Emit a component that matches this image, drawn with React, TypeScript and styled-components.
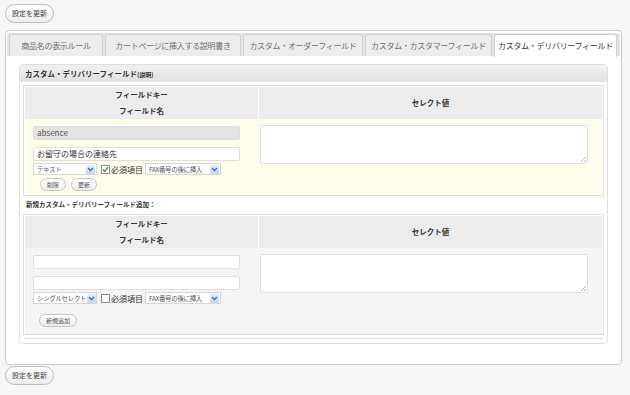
import React from "react";
import styled, { createGlobalStyle, css } from "styled-components";

const GlobalStyle = createGlobalStyle`
  html, body {
    margin: 0;
    background: #f6f6f6;
    font-family: "Noto Sans CJK JP", "DejaVu Sans", sans-serif;
    color: #333;
  }
`;

const Page = styled.div`
  padding: 4px 8px 8px 5px;
  width: 617px;
`;

const UpdateButton = styled.button`
  display: block;
  height: 19px;
  padding: 0 6px;
  border: 1px solid #bdbdbd;
  border-radius: 10px;
  background: linear-gradient(#ffffff, #ececec);
  font-family: inherit;
  font-size: 7px;
  color: #444;
  line-height: 17px;
`;

const TabPanel = styled.div`
  margin: 7px 0 1px;
  border: 1px solid #c9c9c9;
  border-radius: 4px;
  background: #fff;
  padding: 2px 0 0;
  height: 335px;
  box-sizing: border-box;
`;

const TabBar = styled.div`
  display: flex;
  gap: 2px;
  margin: 0 1px;
  padding: 1px 0 0 2px;
  height: 22px;
  background: #e4e4e4;
  border-radius: 3px 3px 0 0;
`;

const Tab = styled.div<{ $active?: boolean; $width: number }>`
  width: ${(p) => p.$width}px;
  flex: none;
  height: 22px;
  box-sizing: border-box;
  border: 1px solid #cfcfcf;
  border-bottom: none;
  border-radius: 3px 3px 0 0;
  background: #ececec;
  color: #6f6f6f;
  font-size: 8px;
  letter-spacing: -0.3px;
  line-height: 21px;
  text-align: center;
  white-space: nowrap;
  ${(p) =>
    p.$active &&
    css`
      background: #fff;
      color: #333;
      height: 23px;
    `}
`;

const Content = styled.div`
  padding: 8px 13px 0 13px;
`;

const Box = styled.div`
  border: 1px solid #dedede;
  border-radius: 4px;
  height: 280px;
  box-sizing: border-box;
`;

const BoxHeader = styled.div`
  height: 17px;
  padding: 0 5px;
  background: linear-gradient(#f0f0f0, #e2e2e2);
  border-radius: 3px 3px 0 0;
  font-size: 7.5px;
  font-weight: bold;
  line-height: 17px;
  color: #333;

  small {
    font-size: 6px;
  }
`;

const BoxBody = styled.div`
  padding: 3px 3px 0;
`;

const FieldTable = styled.div`
  display: grid;
  grid-template-columns: 233px 1fr;
  border: 1px solid #dcdcdc;
  padding: 1px 1px 0;
`;

const HeadCell = styled.div<{ $rows?: number }>`
  background: #ececec;
  height: 16px;
  font-size: 7.5px;
  font-weight: bold;
  line-height: 16px;
  text-align: center;
  ${(p) =>
    p.$rows &&
    css`
      grid-row: span ${p.$rows};
      height: auto;
      display: flex;
      align-items: center;
      justify-content: center;
      margin-left: 1px;
    `}
`;

const BodyCell = styled.div<{ $tone: "edit" | "new"; $right?: boolean }>`
  background: ${(p) => (p.$tone === "edit" ? "#fdfde9" : "#f4f4f4")};
  display: flex;
  flex-direction: column;
  align-items: flex-start;
  padding: ${(p) => (p.$right ? "6px 0 0 2px" : "7px 0 5px 8px")};
  height: ${(p) => (p.$tone === "edit" ? "76px" : "86px")};
  box-sizing: border-box;
`;

const TextInput = styled.div<{ $readonly?: boolean; $gap?: number }>`
  width: 207px;
  height: 14px;
  box-sizing: border-box;
  border: 1px solid #dedede;
  border-radius: 2px;
  background: ${(p) => (p.$readonly ? "#e3e3e3" : "#fff")};
  font-size: 8px;
  line-height: 12px;
  padding: 0 3px;
  color: ${(p) => (p.$readonly ? "#555" : "#333")};
  margin-top: ${(p) => p.$gap ?? 0}px;
`;

const TextArea = styled.div<{ $height: number }>`
  position: relative;
  width: 328px;
  height: ${(p) => p.$height}px;
  box-sizing: border-box;
  border: 1px solid #dedede;
  border-radius: 2px;
  background: #fff;
`;

const Grip = styled.svg`
  position: absolute;
  right: 1px;
  bottom: 1px;
`;

const OptionRow = styled.div`
  display: flex;
  align-items: center;
  height: 12px;
  margin-top: 2px;
`;

const Select = styled.div<{ $width: number }>`
  display: flex;
  align-items: center;
  justify-content: space-between;
  width: ${(p) => p.$width}px;
  height: 12px;
  box-sizing: border-box;
  border: 1px solid #d6d6d6;
  background: #fff;
  padding: 0 1px 0 3px;
  font-size: 6.5px;
  letter-spacing: -0.35px;
  color: #555;
  white-space: nowrap;
  overflow: hidden;
`;

const Arrow = styled.span`
  display: flex;
  flex: none;
  align-items: center;
  justify-content: center;
  width: 9px;
  height: 9px;
  margin-left: 1px;
  background: linear-gradient(#e2ecfa, #c3d6f2);
  border-radius: 1px;
`;

const CheckLabel = styled.label`
  display: flex;
  align-items: center;
  margin: 0 2px 0 4px;
  font-size: 8px;
  color: #333;
`;

const CheckBox = styled.span`
  display: flex;
  width: 9px;
  height: 9px;
  box-sizing: border-box;
  border: 1px solid #8d8d8d;
  background: #fff;
  margin-right: 1px;
`;

const SmallButtons = styled.div<{ $top: number; $left: number }>`
  display: flex;
  gap: 5px;
  margin: ${(p) => p.$top}px 0 0 ${(p) => p.$left}px;
`;

const SmallButton = styled.button`
  height: 13px;
  padding: 0 6px;
  border: 1px solid #c4c4c4;
  border-radius: 7px;
  background: linear-gradient(#ffffff, #ededed);
  font-family: inherit;
  font-size: 6px;
  color: #555;
  line-height: 11px;
`;

const NewLabel = styled.div`
  font-size: 6.5px;
  font-weight: bold;
  padding: 4px 0 5px 3px;
  line-height: 9px;
`;

const FootLine = styled.div`
  margin: 3px 1px 0;
  height: 1px;
  border-top: 1px solid #dcdcdc;
`;

const SelectBox = ({ label, width }: { label: string; width: number }) => (
  <Select $width={width}>
    <span>{label}</span>
    <Arrow>
      <svg width="7" height="5" viewBox="0 0 7 5">
        <path d="M1 1 L3.5 3.5 L6 1" stroke="#3b6fc4" strokeWidth="1.4" fill="none" />
      </svg>
    </Arrow>
  </Select>
);

const Required = ({ checked }: { checked?: boolean }) => (
  <CheckLabel>
    <CheckBox>
      {checked && (
        <svg width="7" height="7" viewBox="0 0 7 7">
          <path d="M1 3.5 L2.8 5.5 L6 1.2" stroke="#2f9a2f" strokeWidth="1.4" fill="none" />
        </svg>
      )}
    </CheckBox>
    必須項目
  </CheckLabel>
);

const ResizeGrip = () => (
  <Grip width="6" height="6" viewBox="0 0 6 6">
    <path d="M6 1 L1 6 M6 4 L4 6" stroke="#999" strokeWidth="0.8" />
  </Grip>
);

const TableHead = () => (
  <>
    <HeadCell>フィールドキー</HeadCell>
    <HeadCell $rows={2}>セレクト値</HeadCell>
    <HeadCell>フィールド名</HeadCell>
  </>
);

const tabs = [
  { label: "商品名の表示ルール", width: 94 },
  { label: "カートページに挿入する説明書き", width: 136 },
  { label: "カスタム・オーダーフィールド", width: 120 },
  { label: "カスタム・カスタマーフィールド", width: 127 },
  { label: "カスタム・デリバリーフィールド", width: 123 },
];

const App = () => {
  return (
    <>
      <GlobalStyle />
      <Page>
        <UpdateButton>設定を更新</UpdateButton>
        <TabPanel>
          <TabBar>
            {tabs.map((t, i) => (
              <Tab key={t.label} $width={t.width} $active={i === tabs.length - 1}>
                {t.label}
              </Tab>
            ))}
          </TabBar>
          <Content>
            <Box>
              <BoxHeader>
                カスタム・デリバリーフィールド<small>(説明)</small>
              </BoxHeader>
              <BoxBody>
                <FieldTable>
                  <TableHead />
                  <BodyCell $tone="edit">
                    <TextInput $readonly>absence</TextInput>
                    <TextInput $gap={7}>お留守の場合の連絡先</TextInput>
                    <OptionRow>
                      <SelectBox label="テキスト" width={64} />
                      <Required checked />
                      <SelectBox label="FAX番号の後に挿入" width={76} />
                    </OptionRow>
                    <SmallButtons $top={3} $left={7}>
                      <SmallButton>削除</SmallButton>
                      <SmallButton>更新</SmallButton>
                    </SmallButtons>
                  </BodyCell>
                  <BodyCell $tone="edit" $right>
                    <TextArea $height={39}>
                      <ResizeGrip />
                    </TextArea>
                  </BodyCell>
                </FieldTable>

                <NewLabel>新規カスタム・デリバリーフィールド追加：</NewLabel>

                <FieldTable>
                  <TableHead />
                  <BodyCell $tone="new">
                    <TextInput />
                    <TextInput $gap={7} />
                    <OptionRow>
                      <SelectBox label="シングルセレクト" width={64} />
                      <Required />
                      <SelectBox label="FAX番号の後に挿入" width={76} />
                    </OptionRow>
                    <SmallButtons $top={10} $left={6}>
                      <SmallButton>新規追加</SmallButton>
                    </SmallButtons>
                  </BodyCell>
                  <BodyCell $tone="new" $right>
                    <TextArea $height={39}>
                      <ResizeGrip />
                    </TextArea>
                  </BodyCell>
                </FieldTable>
                <FootLine />
              </BoxBody>
            </Box>
          </Content>
        </TabPanel>
        <UpdateButton>設定を更新</UpdateButton>
      </Page>
    </>
  );
};

export default App;
